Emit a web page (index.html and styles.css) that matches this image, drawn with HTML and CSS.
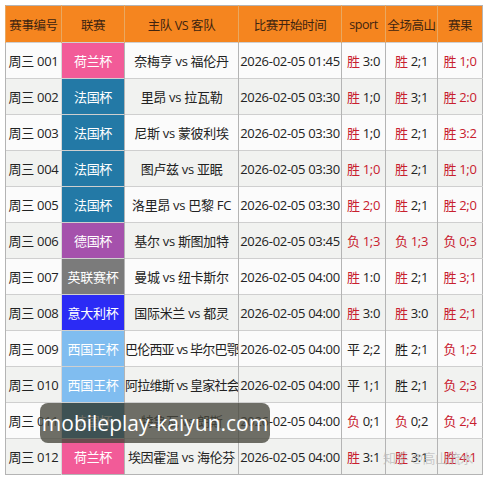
FILE: index.html
```html
<!DOCTYPE html>
<html>

<head>
  <meta charset="utf-8">
  <title>赛事列表</title>
  <link rel="stylesheet" href="styles.css">
</head>

<body>
  <div class="board">
    <table class="matches">
      <colgroup>
        <col class="c-no">
        <col class="c-league">
        <col class="c-teams">
        <col class="c-time">
        <col class="c-sport">
        <col class="c-full">
        <col class="c-result">
      </colgroup>
      <thead>
        <tr>
          <th>赛事编号</th>
          <th>联赛</th>
          <th>主队 VS 客队</th>
          <th>比赛开始时间</th>
          <th>sport</th>
          <th>全场高山</th>
          <th>赛果</th>
        </tr>
      </thead>
      <tbody>
        <tr>
          <td>周三 001</td>
          <td class="league nl">荷兰杯</td>
          <td>奈梅亨 vs 福伦丹</td>
          <td>2026-02-05 01:45</td>
          <td><span class="red">胜</span> 3:0</td>
          <td><span class="red">胜</span> 2;1</td>
          <td class="red">胜 1;0</td>
        </tr>
        <tr>
          <td>周三 002</td>
          <td class="league fr">法国杯</td>
          <td>里昂 vs 拉瓦勒</td>
          <td>2026-02-05 03:30</td>
          <td><span class="red">胜</span> 1;0</td>
          <td><span class="red">胜</span> 3;1</td>
          <td class="red">胜 2:0</td>
        </tr>
        <tr>
          <td>周三 003</td>
          <td class="league fr">法国杯</td>
          <td>尼斯 vs 蒙彼利埃</td>
          <td>2026-02-05 03:30</td>
          <td><span class="red">胜</span> 1;0</td>
          <td><span class="red">胜</span> 2;1</td>
          <td class="red">胜 3:2</td>
        </tr>
        <tr>
          <td>周三 004</td>
          <td class="league fr">法国杯</td>
          <td>图卢兹 vs 亚眠</td>
          <td>2026-02-05 03:30</td>
          <td class="red">胜 1;0</td>
          <td><span class="red">胜</span> 2;1</td>
          <td class="red">胜 1;0</td>
        </tr>
        <tr>
          <td>周三 005</td>
          <td class="league fr">法国杯</td>
          <td>洛里昂 vs 巴黎 FC</td>
          <td>2026-02-05 03:30</td>
          <td class="red">胜 2;0</td>
          <td><span class="red">胜</span> 2;1</td>
          <td class="red">胜 2;0</td>
        </tr>
        <tr>
          <td>周三 006</td>
          <td class="league de">德国杯</td>
          <td>基尔 vs 斯图加特</td>
          <td>2026-02-05 03:45</td>
          <td class="red">负 1;3</td>
          <td class="red">负 1;3</td>
          <td class="red">负 0;3</td>
        </tr>
        <tr>
          <td>周三 007</td>
          <td class="league en">英联赛杯</td>
          <td>曼城 vs 纽卡斯尔</td>
          <td>2026-02-05 04:00</td>
          <td><span class="red">胜</span> 1:0</td>
          <td><span class="red">胜</span> 2;1</td>
          <td class="red">胜 3;1</td>
        </tr>
        <tr>
          <td>周三 008</td>
          <td class="league it">意大利杯</td>
          <td>国际米兰 vs 都灵</td>
          <td>2026-02-05 04:00</td>
          <td><span class="red">胜</span> 3:0</td>
          <td><span class="red">胜</span> 3:0</td>
          <td class="red">胜 2;1</td>
        </tr>
        <tr>
          <td>周三 009</td>
          <td class="league es">西国王杯</td>
          <td class="tight">巴伦西亚 vs 毕尔巴鄂</td>
          <td>2026-02-05 04:00</td>
          <td>平 2;2</td>
          <td>胜 2;1</td>
          <td class="red">负 1;2</td>
        </tr>
        <tr>
          <td>周三 010</td>
          <td class="league es">西国王杯</td>
          <td class="tight">阿拉维斯 vs 皇家社会</td>
          <td>2026-02-05 04:00</td>
          <td>平 1;1</td>
          <td>胜 2;1</td>
          <td class="red">负 2;3</td>
        </tr>
        <tr>
          <td>周三 011</td>
          <td class="league fr">法国杯</td>
          <td>特鲁瓦 vs 朗斯</td>
          <td>2026-02-05 04:00</td>
          <td><span class="red">负</span> 0;1</td>
          <td><span class="red">负</span> 0;2</td>
          <td class="red">负 2;4</td>
        </tr>
        <tr>
          <td>周三 012</td>
          <td class="league nl">荷兰杯</td>
          <td>埃因霍温 vs 海伦芬</td>
          <td>2026-02-05 04:00</td>
          <td><span class="red">胜</span> 3:1</td>
          <td><span class="red">胜</span> 3:1</td>
          <td class="red">胜 4:1</td>
        </tr>
      </tbody>
    </table>

    <!-- watermarks over the picture -->
    <div class="site-mark">mobileplay-kaiyun.com</div>
    <div class="zhihu-mark">知乎 @高山流水</div>
  </div>
</body>

</html>
```

FILE: styles.css
```css
body {
  margin: 0;
  background: #fff;
  font-family: "Open Sans", "Noto Sans CJK SC", sans-serif;
  font-size: 13px;
  color: #222;
}

.board {
  position: relative;
  padding: 5px;
}

table.matches {
  width: 477px;
  table-layout: fixed;
  border-collapse: collapse;
  border: 1px solid #b4b4b4;
}

col.c-no { width: 56px; }
col.c-league { width: 63px; }
col.c-teams { width: 114px; }
col.c-time { width: 103px; }
col.c-sport { width: 44px; }
col.c-full { width: 52px; }
col.c-result { width: 45px; }

table.matches th {
  height: 36px;
  padding: 0;
  background: #f5851f;
  color: #3e2410;
  font-size: 12.5px;
  font-weight: normal;
  text-align: center;
  border-left: 1px solid #e9a860;
  white-space: nowrap;
  letter-spacing: -0.4px;
}

table.matches td {
  height: 35px;
  padding: 0;
  text-align: center;
  white-space: nowrap;
  overflow: hidden;
  border-top: 1px solid #cfcfcf;
  border-left: 1px solid #b4b4b4;
  letter-spacing: -0.3px;
}

table.matches tbody tr:nth-child(odd) {
  background: #fbfbfb;
}

table.matches tbody tr:nth-child(even) {
  background: #f1f2f0;
}

table.matches td.tight {
  letter-spacing: -0.8px;
}

table.matches td.league {
  color: #fff;
  border-left-color: #d8d8d8;
}

table.matches td.nl { background: #f25b98; }
table.matches td.fr { background: #2379a6; }
table.matches td.de { background: #a551ac; }
table.matches td.en { background: #7b7b7b; }
table.matches td.it { background: #2b2bf5; }
table.matches td.es { background: #80bdf0; }

.red {
  color: #c8202e;
}

.site-mark {
  position: absolute;
  left: 40px;
  top: 403px;
  width: 230px;
  height: 40px;
  border-radius: 8px;
  background: rgba(70, 70, 60, 0.78);
  color: #fff;
  font-size: 21px;
  line-height: 40px;
  text-align: center;
}

.zhihu-mark {
  position: absolute;
  left: 383px;
  top: 448px;
  color: rgba(185, 185, 185, 0.75);
  font-size: 13px;
  letter-spacing: -0.4px;
}
```
